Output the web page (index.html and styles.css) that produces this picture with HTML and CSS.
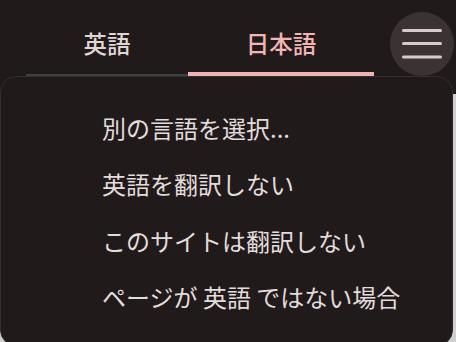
FILE: index.html
```html
<!DOCTYPE html>
<html lang="ja">
<head>
<meta charset="utf-8">
<link rel="stylesheet" href="styles.css">
</head>
<body>
<div class="screen">
  <header class="bar">
    <nav class="tabs">
      <div class="tab">英語</div>
      <div class="tab active">日本語</div>
    </nav>
    <button class="menu-btn" aria-label="メニュー">
      <svg width="40" height="30" viewBox="0 0 40 30">
        <g stroke="#d9cbcb" stroke-width="3" stroke-linecap="round">
          <line x1="1.5" y1="1.5" x2="38.5" y2="1.5"/>
          <line x1="1.5" y1="14.5" x2="38.5" y2="14.5"/>
          <line x1="1.5" y1="28" x2="38.5" y2="28"/>
        </g>
      </svg>
    </button>
  </header>
  <ul class="menu">
    <li>別の言語を選択...</li>
    <li>英語を翻訳しない</li>
    <li>このサイトは翻訳しない</li>
    <li>ページが 英語 ではない場合</li>
  </ul>
</div>
</body>
</html>
```
FILE: styles.css
```css
html, body {
  margin: 0;
  padding: 0;
}
body {
  width: 456px;
  height: 342px;
  overflow: hidden;
  background: linear-gradient(#201a1b 0 94px, #cfcfcf 94px);
  font-family: "Noto Sans CJK JP", "Noto Sans", sans-serif;
}
.screen {
  width: 456px;
  height: 342px;
  overflow: hidden;
  border-top-left-radius: 6px;
}
.bar {
  height: 76px;
  display: flex;
  align-items: flex-start;
  background: #201a1b;
  border-top-left-radius: 6px;
}
.tabs {
  margin-left: 26px;
  width: 348px;
  height: 76px;
  display: flex;
  box-shadow: inset 0 -2px 0 #3e4142;
}
.tab {
  flex: 0 0 162px;
  height: 76px;
  display: flex;
  align-items: center;
  justify-content: center;
  padding-top: 13px;
  box-sizing: border-box;
  color: #e0d6d6;
  font-size: 23.5px;
  font-weight: 500;
  border-bottom: 4px solid transparent;
}
.tab.active {
  flex: 0 0 186px;
  color: #f2b5b3;
  border-bottom-color: #f0b3b1;
}
.menu-btn {
  margin: 12px 0 0 16px;
  width: 64px;
  height: 64px;
  border-radius: 50%;
  border: 0;
  padding: 0;
  background: #3a3233;
  display: flex;
  align-items: center;
  justify-content: center;
}
.menu {
  list-style: none;
  margin: 0;
  width: 453px;
  height: 270px;
  box-sizing: border-box;
  background: #201a1b;
  border: 1px solid #352e2f;
  border-radius: 16px;
  padding: 22px 0 0 101px;
}
.menu li {
  height: 56.5px;
  display: flex;
  align-items: center;
  color: #e3dcdc;
  font-size: 24px;
}
```
